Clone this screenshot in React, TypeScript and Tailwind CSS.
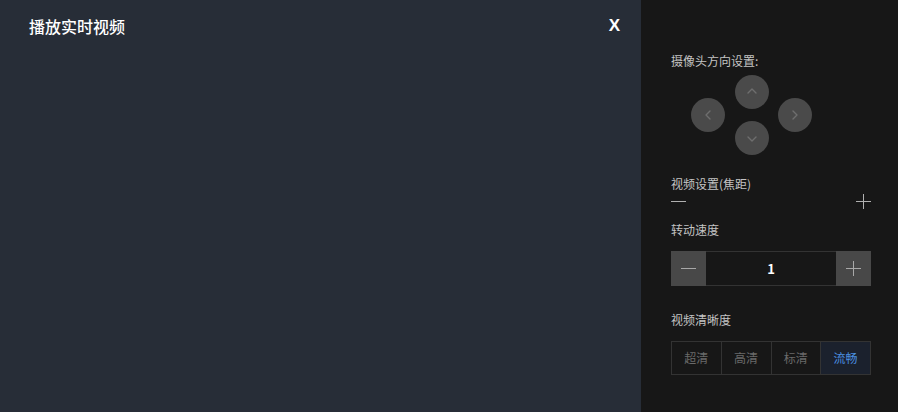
import React from "react";

const font = { fontFamily: '"Noto Sans CJK SC", "Noto Sans", sans-serif' };

function Chevron({ dir }: { dir: "up" | "down" | "left" | "right" }) {
  const d =
    dir === "up"
      ? "M4 9 L8 5 L12 9"
      : dir === "down"
      ? "M4 7 L8 11 L12 7"
      : dir === "left"
      ? "M10 4 L6 8 L10 12"
      : "M6 4 L10 8 L6 12";
  return (
    <svg width="16" height="16" viewBox="0 0 16 16" fill="none">
      <path d={d} stroke="#6e6e6e" strokeWidth="1.4" strokeLinecap="round" strokeLinejoin="round" />
    </svg>
  );
}

function Circle({ dir }: { dir: "up" | "down" | "left" | "right" }) {
  return (
    <div className="w-[34px] h-[34px] rounded-full bg-[#4a4a4a] flex items-center justify-center">
      <Chevron dir={dir} />
    </div>
  );
}

function Minus({ color = "#b0b0b0" }: { color?: string }) {
  return (
    <svg width="15" height="15" viewBox="0 0 15 15">
      <rect x="0" y="7" width="15" height="1" fill={color} />
    </svg>
  );
}

function Plus({ color = "#b0b0b0" }: { color?: string }) {
  return (
    <svg width="15" height="15" viewBox="0 0 15 15">
      <rect x="0" y="7" width="15" height="1" fill={color} />
      <rect x="7" y="0" width="1" height="15" fill={color} />
    </svg>
  );
}

export default function App() {
  const qualities = ["超清", "高清", "标清", "流畅"];
  return (
    <div className="w-[898px] h-[412px] flex overflow-hidden" style={font}>
      <div className="w-[641px] h-full bg-[#272d37] flex items-start justify-between pl-[29px] pr-[21px] pt-[16px]">
        <div className="text-white text-[16px] leading-[20px] font-medium">播放实时视频</div>
        <div className="text-white text-[17px] leading-[20px] font-bold" style={{ fontFamily: '"Liberation Sans", sans-serif' }}>
          X
        </div>
      </div>
      <div className="flex-1 h-full bg-[#171717] pl-[30px] pr-[27px] pt-[53px] flex flex-col">
        <div className="text-[12px] leading-[16px] text-[#c4c4c4]">摄像头方向设置:</div>
        <div className="mt-[6px] ml-[20px] flex items-center">
          <Circle dir="left" />
          <div className="ml-[10px] flex flex-col gap-[12px]">
            <Circle dir="up" />
            <Circle dir="down" />
          </div>
          <div className="ml-[9px]">
            <Circle dir="right" />
          </div>
        </div>
        <div className="mt-[21px] text-[12px] leading-[16px] text-[#c4c4c4]">视频设置(焦距)</div>
        <div className="mt-[2px] h-[15px] flex items-center justify-between">
          <Minus />
          <Plus />
        </div>
        <div className="mt-[13px] text-[12px] leading-[16px] text-[#c4c4c4]">转动速度</div>
        <div className="mt-[13px] h-[35px] flex">
          <div className="w-[35px] h-full bg-[#484848] flex items-center justify-center">
            <Minus color="#a8a8a8" />
          </div>
          <div className="flex-1 h-full border-y border-[#333333] flex items-center justify-center text-white text-[13px] font-bold">
            1
          </div>
          <div className="w-[35px] h-full bg-[#484848] flex items-center justify-center">
            <Plus color="#a8a8a8" />
          </div>
        </div>
        <div className="mt-[26px] text-[12px] leading-[16px] text-[#c4c4c4]">视频清晰度</div>
        <div className="mt-[13px] h-[34px] flex border border-[#333333]">
          {qualities.map((q, i) => (
            <div
              key={q}
              className={
                i === 3
                  ? "flex-1 flex items-center justify-center text-[12px] text-[#4a8fe0] bg-[#1b212d]"
                  : "flex-1 flex items-center justify-center text-[12px] text-[#6a6a6a] border-r border-[#333333]"
              }
            >
              {q}
            </div>
          ))}
        </div>
      </div>
    </div>
  );
}
